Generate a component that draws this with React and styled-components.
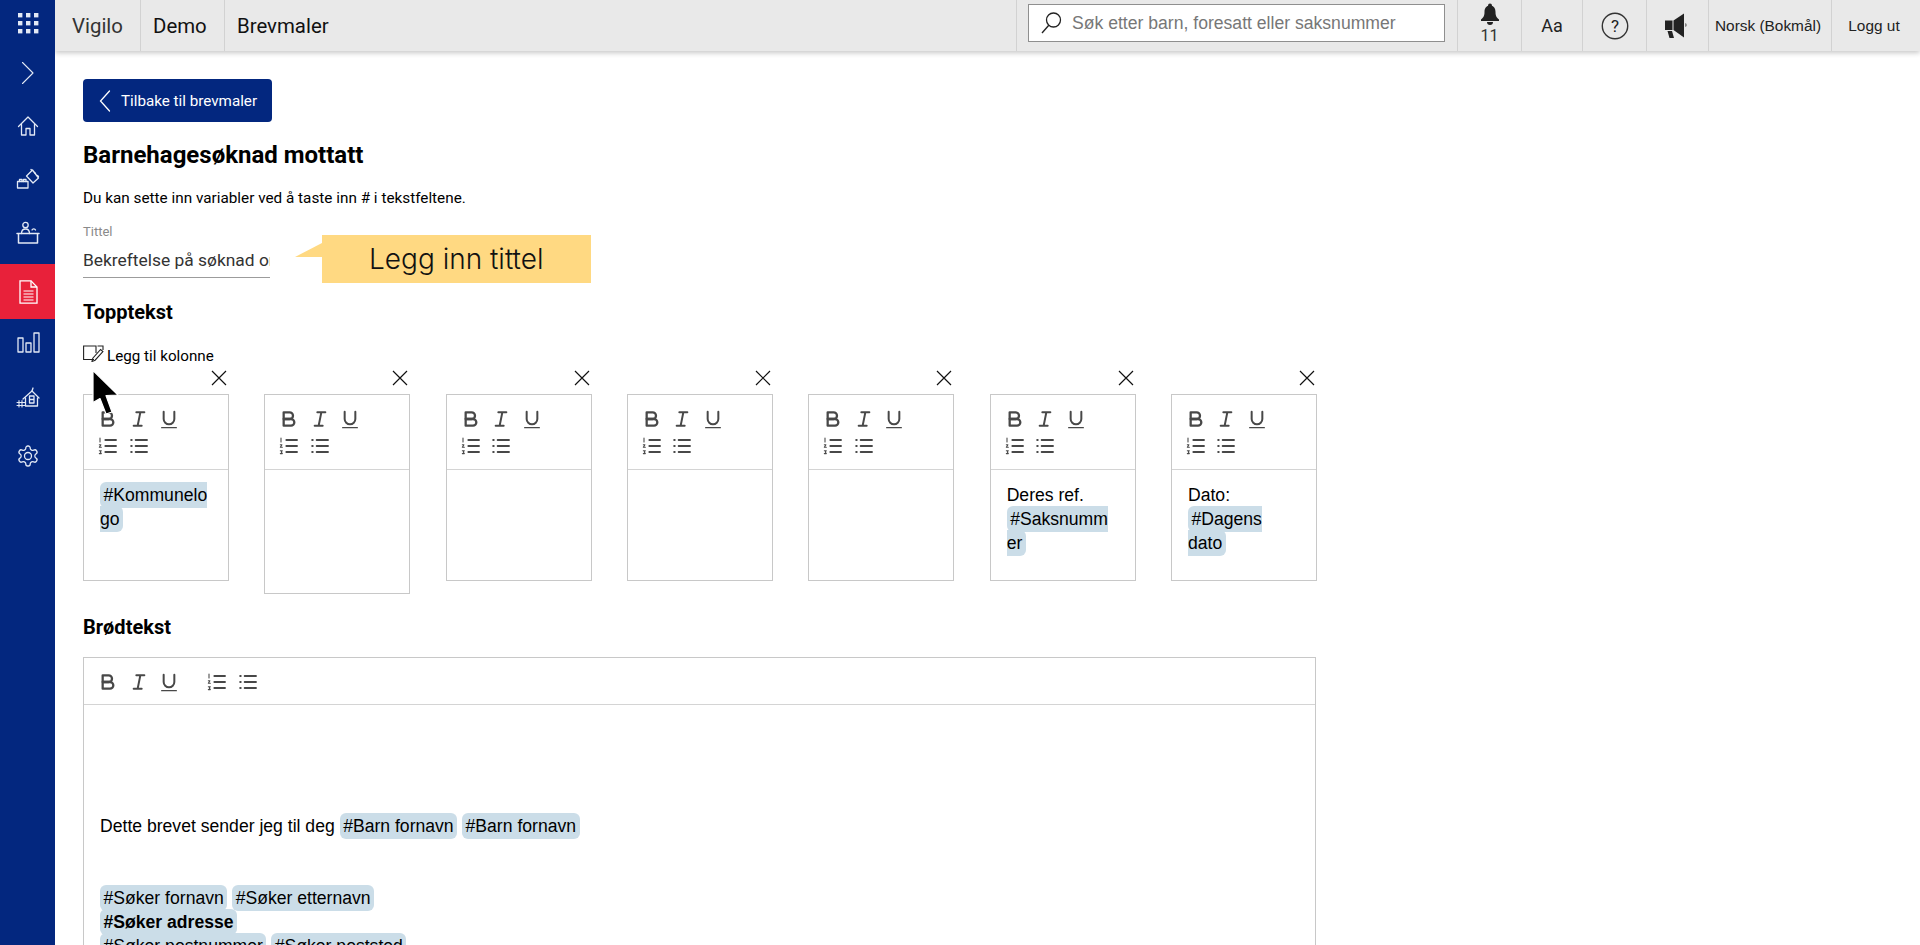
import React from 'react'
import styled, { createGlobalStyle } from 'styled-components'

const GlobalStyle = createGlobalStyle`
    html, body {
        margin: 0;
        height: 100%;
        overflow: hidden;
        background: #fff;
        font-family: Roboto, "Liberation Sans", sans-serif;
    }
    * { box-sizing: border-box; }
`;

const Page = styled.div`
    display: flex;
    height: 100vh;
    overflow: hidden;
`;

const Sidebar = styled.nav`
    width: 55px;
    flex-shrink: 0;
    background: #03277f;
    display: flex;
    flex-direction: column;
    position: relative;
    z-index: 2;
`;

const SideItem = styled.div`
    height: ${p => p.$h || 55}px;
    padding-bottom: ${p => p.$lift || 0}px;
    display: flex;
    align-items: center;
    justify-content: center;
    background: ${p => p.$active ? '#e8213a' : 'transparent'};
    color: #e3e9f5;
`;

const Main = styled.div`
    flex: 1;
    min-width: 0;
    display: flex;
    flex-direction: column;
`;

const TopBar = styled.header`
    height: 51px;
    flex-shrink: 0;
    display: flex;
    background: #e9e9e9;
    box-shadow: 0 2px 5px rgba(0, 0, 0, 0.22);
    position: relative;
    z-index: 1;
`;

const Crumb = styled.div`
    width: ${p => p.$w}px;
    border-right: ${p => p.$last ? 'none' : '1px solid #d2d2d2'};
    display: flex;
    align-items: center;
    padding-left: ${p => p.$pad || 12}px;
    font-size: 20.4px;
    color: ${p => p.$muted ? '#333' : '#111'};
`;

const Spacer = styled.div`
    flex: 1;
`;

const SearchCell = styled.div`
    width: 442px;
    border-left: 1px solid #d2d2d2;
    border-right: 1px solid #d2d2d2;
    padding: 4px 12px 9px 11px;
`;

const SearchBox = styled.div`
    height: 38px;
    background: #fff;
    border: 1px solid #8f8f8f;
    display: flex;
    align-items: center;
    padding-left: 10px;
    gap: 9px;
`;

const SearchInput = styled.input`
    flex: 1;
    min-width: 0;
    border: none;
    outline: none;
    padding: 0;
    font-family: "Liberation Sans", Arial, sans-serif;
    font-size: 17.6px;
    &::placeholder { color: #777; opacity: 1; }
`;

const ToolCell = styled.div`
    width: ${p => p.$w}px;
    border-right: 1px solid #d2d2d2;
    display: flex;
    flex-direction: column;
    align-items: center;
    justify-content: center;
    color: #222;
    font-family: ${p => p.$helv ? '"Liberation Sans", Arial, sans-serif' : 'Roboto, sans-serif'};
    font-size: ${p => p.$size || 15.4}px;
    padding-right: ${p => p.$helv ? 4 : 0}px;
    &:last-child { border-right: none; }
`;

const BellCell = styled(ToolCell)`
    padding-bottom: 4px;
`;

const BellCount = styled.span`
    font-size: 16px;
    line-height: 16px;
    margin-top: 1px;
    color: #333;
`;

const Content = styled.main`
    flex: 1;
    padding: 28px 28px 0;
    position: relative;
    overflow: hidden;
`;

const BackButton = styled.button`
    width: 189px;
    height: 43px;
    border: none;
    border-radius: 4px;
    background: #03277f;
    color: #fff;
    display: flex;
    align-items: center;
    padding: 0 0 0 16px;
    gap: 10px;
    font-family: Roboto, sans-serif;
    font-size: 15.2px;
    font-weight: 400;
`;

const Title = styled.h1`
    margin: 19px 0 0;
    font-size: 24px;
    line-height: 28px;
    font-weight: 700;
    color: #000;
`;

const Intro = styled.p`
    margin: 19px 0 0;
    font-size: 15.3px;
    line-height: 20px;
    color: #000;
`;

const TitleRow = styled.div`
    display: flex;
    align-items: flex-start;
    margin-top: 17px;
`;

const Field = styled.label`
    width: 187px;
    display: block;
`;

const FieldLabel = styled.span`
    display: block;
    font-size: 13px;
    line-height: 14px;
    color: #8a8a8a;
`;

const FieldInput = styled.input`
    display: block;
    width: 100%;
    height: 39px;
    margin-top: 0;
    padding: 4px 0 0;
    border: none;
    border-bottom: 1px solid #9c9c9c;
    outline: none;
    font-family: Roboto, sans-serif;
    font-size: 17.4px;
    color: #333;
`;

const Callout = styled.div`
    width: 269px;
    height: 48px;
    margin: 10px 0 0 52px;
    padding-left: 47px;
    background: #ffd982;
    display: flex;
    align-items: center;
    font-family: Inter, sans-serif;
    font-weight: 300;
    font-size: 28px;
    color: #111;
    position: relative;
    &::before {
        content: '';
        position: absolute;
        left: -27px;
        top: 8px;
        width: 27px;
        height: 14px;
        background: #ffd982;
        clip-path: polygon(100% 0, 100% 100%, 0 100%);
    }
`;

const SectionTitle = styled.h2`
    margin: ${p => p.$top}px 0 ${p => p.$bottom || 0}px;
    font-size: 20px;
    line-height: 24px;
    font-weight: 700;
    color: #000;
`;

const AddColumn = styled.div`
    margin-top: 21px;
    height: 21px;
    display: flex;
    align-items: flex-start;
    gap: 3px;
    font-size: 15.2px;
    line-height: 23px;
    color: #000;
`;

const Columns = styled.div`
    display: flex;
    align-items: flex-start;
    gap: 35.33px;
    width: 1233px;
    margin-top: 1px;
`;

const Column = styled.div`
    flex: 0 0 146px;
`;

const CloseRow = styled.div`
    height: 27px;
    display: flex;
    justify-content: flex-end;
    align-items: center;
    padding: 0 2px 6px 0;
`;

const EditorBox = styled.div`
    border: 1px solid #c8c8c8;
    width: ${p => p.$wide ? '1233px' : 'auto'};
`;

const Toolbar = styled.div`
    display: flex;
    flex-wrap: wrap;
    gap: 3px 24px;
    padding: ${p => p.$wide ? '12px 12px 10px' : '12px 12px 11px'};
    border-bottom: 1px solid #d4d4d4;
    color: #484848;
`;

const ToolGroup = styled.div`
    display: flex;
    gap: 6.5px;
`;

const ColumnBody = styled.div`
    height: ${p => p.$tall ? 123 : 110}px;
    padding: 13px 20px 0 16px;
    font-family: "Liberation Sans", Arial, sans-serif;
    font-size: 17.6px;
    line-height: 24px;
    color: #000;
    overflow-wrap: anywhere;
`;

const BodyText = styled.div`
    height: 600px;
    padding: 109px 16px 0;
    font-family: "Liberation Sans", Arial, sans-serif;
    font-size: 17.6px;
    line-height: 24px;
    color: #000;
`;

const Paragraph = styled.p`
    margin: 0 0 48px;
`;

const Chip = styled.span`
    background: #cbdde8;
    border-radius: 6px;
    padding: 3px 3.5px;
    font-weight: ${p => p.$bold ? 700 : 400};
`;

const PointerWrap = styled.div`
    position: absolute;
    left: 36px;
    top: 318px;
    line-height: 0;
`;

const Ico = ({ size = 24, vb = '0 0 24 24', sw = 1.3, children }) => (
    <svg width={size} height={size} viewBox={vb} fill="none" stroke="currentColor" strokeWidth={sw} strokeLinecap="round" strokeLinejoin="round">
        {children}
    </svg>
)

const GridIcon = () => (
    <svg width="24" height="24" viewBox="0 0 24 24" fill="currentColor">
        {[2, 10, 18].map(y => [2, 10, 18].map(x => <rect key={`${x}-${y}`} x={x} y={y} width="4.4" height="4.4" />))}
    </svg>
)

const ChevronRight = () => <Ico size={24} sw={1.1}><path d="M6.5 1.5 17 12 6.5 22.500" /></Ico>

const HomeIcon = () => (
    <Ico size={24}>
        <path d="M2.500 12.500 12 3l9.500 9.500" />
        <path d="M5.500 10.500V21h4.500v-6.500h4V21h4.500V10.500" />
    </Ico>
)

const ToysIcon = () => (
    <Ico size={24}>
        <path d="M1.500 14.500h10.500V21H1.500z" />
        <path d="M3.500 14.500v-2h2.500v2M7.500 14.500v-2h2.500v2" />
        <path d="m10.500 9 6-6 6 8-5.500 5z" />
        <path d="m15 2.500 1 1M18.500 5.500l1 1M21.500 8.500l1 1" />
    </Ico>
)

const DeskIcon = () => (
    <Ico size={24}>
        <circle cx="9.500" cy="4" r="2.700" />
        <path d="M5.500 12.500c0-3 1.500-4.500 4-4.500s4 1.500 4 4.500" />
        <path d="M16 9c.5-1.500 3-1.500 3.500 0" />
        <path d="M1 12.500h22M2.500 12.500v9.500h19v-9.500" strokeWidth="1.500" />
    </Ico>
)

const DocIcon = () => (
    <svg width="24" height="24" viewBox="0 0 24 24" fill="none" stroke="#fff" strokeWidth="1.300">
        <path d="M4 .8h11L21 7v16.200H4z" />
        <path d="M15 .8V7h6" />
        <path d="M7.500 11h10M7.500 14h10M7.500 17h10M7.500 20h10" strokeWidth="1.100" />
    </svg>
)

const ChartIcon = () => (
    <Ico size={24}>
        <path d="M2 7h5v14H2zM10 12h5v9h-5zM18 2h5v19h-5z" />
    </Ico>
)

const EstateIcon = () => (
    <Ico size={24}>
        <path d="M7 13 16 5l7 7" />
        <path d="m16 5 1-3" />
        <path d="M9.500 12v8h12v-8" />
        <path d="M13.500 10h4.500v7h-4.500zM13.500 13.500h4.500" />
        <path d="M1 16.500h8.500M1 19.500h8.500M3 14.500V21M6 14.500V21" strokeWidth="1.100" />
    </Ico>
)

const GearIcon = () => (
    <Ico size={24}>
        <path d="M12.220 2h-.440a2 2 0 0 0-2 2v.180a2 2 0 0 1-1 1.730l-.430.250a2 2 0 0 1-2 0l-.150-.080a2 2 0 0 0-2.730.730l-.220.380a2 2 0 0 0 .730 2.730l.150.100a2 2 0 0 1 1 1.720v.510a2 2 0 0 1-1 1.740l-.150.090a2 2 0 0 0-.730 2.730l.220.380a2 2 0 0 0 2.730.730l.150-.080a2 2 0 0 1 2 0l.430.250a2 2 0 0 1 1 1.730V20a2 2 0 0 0 2 2h.440a2 2 0 0 0 2-2v-.180a2 2 0 0 1 1-1.730l.430-.250a2 2 0 0 1 2 0l.150.080a2 2 0 0 0 2.730-.730l.220-.390a2 2 0 0 0-.730-2.730l-.150-.080a2 2 0 0 1-1-1.740v-.500a2 2 0 0 1 1-1.740l.150-.090a2 2 0 0 0 .730-2.730l-.220-.380a2 2 0 0 0-2.730-.730l-.150.080a2 2 0 0 1-2 0l-.430-.250a2 2 0 0 1-1-1.730V4a2 2 0 0 0-2-2z" />
        <circle cx="12" cy="12" r="3.500" />
    </Ico>
)

const SearchGlass = () => (
    <svg width="24" height="24" viewBox="0 0 24 24" fill="none" stroke="#222" strokeWidth="1.300">
        <circle cx="14.500" cy="9" r="7" />
        <path d="M9.800 14.200 3 22" />
    </svg>
)

const BellIcon = () => (
    <svg width="22" height="24" viewBox="0 0 22 24" fill="#222">
        <circle cx="11" cy="2.500" r="2" />
        <path d="M11 2.500c4 0 5.500 3 5.500 6.500 0 4 1 5.500 3.500 7.500V18H2v-1.500c2.500-2 3.500-3.500 3.500-7.500 0-3.500 1.500-6.500 5.500-6.500z" />
        <path d="M8 19h6a3 3 0 0 1-6 0z" />
    </svg>
)

const HelpIcon = () => (
    <svg width="28" height="28" viewBox="0 0 28 28" fill="none">
        <circle cx="14" cy="14" r="12.700" stroke="#333" strokeWidth="1.400" />
        <text x="14" y="20" textAnchor="middle" fontFamily="Roboto, sans-serif" fontSize="17" fill="#222">?</text>
    </svg>
)

const MegaphoneIcon = () => (
    <svg width="26" height="26" viewBox="0 0 26 26" fill="#222">
        <path d="M0 7.500h7.500V17H0z" />
        <path d="M8.500 7.500 19 .5v24l-10.500-7.500z" />
        <path d="M2.500 18h4.500l2 7H4.500z" />
        <path d="M20.500 10c1.300.5 1.300 3.500 0 4z" />
    </svg>
)

const BoldIcon = () => (
    <Ico vb="0 0 18 18" sw="1.700">
        <path d="M5 4h4.500a2.500 2.500 0 0 1 0 5H5z" />
        <path d="M5 9h5.500a2.500 2.500 0 0 1 0 5H5z" />
    </Ico>
)

const ItalicIcon = () => (
    <Ico vb="0 0 18 18" sw="1.500">
        <path d="M7 4h6M5 14h6M8 14l2-10" />
    </Ico>
)

const UnderlineIcon = () => (
    <Ico vb="0 0 18 18" sw="1.500">
        <path d="M5 3.500V9a4 4 0 0 0 8 0V3.500" />
        <path d="M3.500 15.500h11" strokeWidth="1" />
    </Ico>
)

const OrderedIcon = () => (
    <Ico vb="0 0 18 18" sw="1.400">
        <path d="M7 4.500h8M7 9h8M7 13.500h8" />
        <path d="M3 3v3M2.500 8h1.200l-1.200 2h1.500M2.500 12.500h1.500l-.8 1 .8 1.200H2.500" strokeWidth=".8" />
    </Ico>
)

const BulletIcon = () => (
    <Ico vb="0 0 18 18" sw="1.400">
        <path d="M6.500 4.500h8.500M6.500 9h8.500M6.500 13.500h8.500" />
        <path d="M3.200 4.500h.3M3.200 9h.3M3.200 13.500h.3" strokeWidth="1.600" />
    </Ico>
)

const BackChevron = () => (
    <svg width="12" height="22" viewBox="0 0 12 22" fill="none" stroke="#fff" strokeWidth="1.300" strokeLinecap="round">
        <path d="M10.500 1 1.500 11l9 10" />
    </svg>
)

const CloseIcon = () => (
    <svg width="16" height="16" viewBox="0 0 16 16" fill="none" stroke="#111" strokeWidth="1.200">
        <path d="m1 1 14 14M15 1 1 15" />
    </svg>
)

const AddColumnIcon = () => (
    <svg width="21" height="17" viewBox="0 0 21 17" fill="none" stroke="#222" strokeWidth="1.100">
        <path d="M11 14.500H.6V1h12.400v7" />
        <path d="M14.500 1h5.500v4" />
        <path d="m9 16.500.8-3.300 7.800-8.700 2.300 2-7.800 8.700z" />
    </svg>
)

const Pointer = () => (
    <svg width="30" height="46" viewBox="0 0 30 46" fill="#000" stroke="#fff" strokeWidth="1.200" strokeLinejoin="round">
        <path d="M2 1.500 27 26l-12 .5 6 16.500-6 2-6-15.500-7 4z" />
    </svg>
)

const EditorToolbar = ({ wide }) => (
    <Toolbar $wide={wide}>
        <ToolGroup>
            <BoldIcon />
            <ItalicIcon />
            <UnderlineIcon />
        </ToolGroup>
        <ToolGroup>
            <OrderedIcon />
            <BulletIcon />
        </ToolGroup>
    </Toolbar>
)

const columns = [
    { body: <Chip>#Kommunelogo</Chip> },
    { tall: true },
    {},
    {},
    {},
    { body: <>Deres ref.<br /><Chip>#Saksnummer</Chip></> },
    { body: <>Dato:<br /><Chip>#Dagens dato</Chip></> },
]

const App = () => {
    return (
        <Page>
            <GlobalStyle />
            <Sidebar>
                <SideItem $h={46}><GridIcon /></SideItem>
                <SideItem $h={53}><ChevronRight /></SideItem>
                <SideItem $lift={1}><HomeIcon /></SideItem>
                <SideItem $lift={6}><ToysIcon /></SideItem>
                <SideItem $lift={7}><DeskIcon /></SideItem>
                <SideItem $active><DocIcon /></SideItem>
                <SideItem $lift={7}><ChartIcon /></SideItem>
                <SideItem $lift={7}><EstateIcon /></SideItem>
                <SideItem $lift={2}><GearIcon /></SideItem>
            </Sidebar>
            <Main>
                <TopBar>
                    <Crumb $w={86} $pad={17} $muted>Vigilo</Crumb>
                    <Crumb $w={84}>Demo</Crumb>
                    <Crumb $w={120} $last>Brevmaler</Crumb>
                    <Spacer />
                    <SearchCell>
                        <SearchBox>
                            <SearchGlass />
                            <SearchInput placeholder="Søk etter barn, foresatt eller saksnummer" />
                        </SearchBox>
                    </SearchCell>
                    <BellCell $w={64}><BellIcon /><BellCount>11</BellCount></BellCell>
                    <ToolCell $w={61} $size={18}>Aa</ToolCell>
                    <ToolCell $w={64}><HelpIcon /></ToolCell>
                    <ToolCell $w={62}><MegaphoneIcon /></ToolCell>
                    <ToolCell $w={123} $helv>Norsk (Bokmål)</ToolCell>
                    <ToolCell $w={88} $helv>Logg ut</ToolCell>
                </TopBar>
                <Content>
                    <BackButton><BackChevron />Tilbake til brevmaler</BackButton>
                    <Title>Barnehagesøknad mottatt</Title>
                    <Intro>Du kan sette inn variabler ved å taste inn # i tekstfeltene.</Intro>
                    <TitleRow>
                        <Field>
                            <FieldLabel>Tittel</FieldLabel>
                            <FieldInput readOnly value="Bekreftelse på søknad om barnehageplass" />
                        </Field>
                        <Callout>Legg inn tittel</Callout>
                    </TitleRow>
                    <SectionTitle $top={17}>Topptekst</SectionTitle>
                    <AddColumn><AddColumnIcon />Legg til kolonne</AddColumn>
                    <Columns>
                        {columns.map((col, i) => (
                            <Column key={i}>
                                <CloseRow><CloseIcon /></CloseRow>
                                <EditorBox>
                                    <EditorToolbar />
                                    <ColumnBody $tall={col.tall}>{col.body}</ColumnBody>
                                </EditorBox>
                            </Column>
                        ))}
                    </Columns>
                    <SectionTitle $top={21} $bottom={18}>Brødtekst</SectionTitle>
                    <EditorBox $wide>
                        <EditorToolbar wide />
                        <BodyText>
                            <Paragraph>Dette brevet sender jeg til deg <Chip>#Barn fornavn</Chip> <Chip>#Barn fornavn</Chip></Paragraph>
                            <Paragraph>
                                <Chip>#Søker fornavn</Chip> <Chip>#Søker etternavn</Chip><br />
                                <Chip $bold>#Søker adresse</Chip><br />
                                <Chip>#Søker postnummer</Chip> <Chip>#Søker poststed</Chip>
                            </Paragraph>
                        </BodyText>
                    </EditorBox>
                    <PointerWrap><Pointer /></PointerWrap>
                </Content>
            </Main>
        </Page>
    )
}

export default App
